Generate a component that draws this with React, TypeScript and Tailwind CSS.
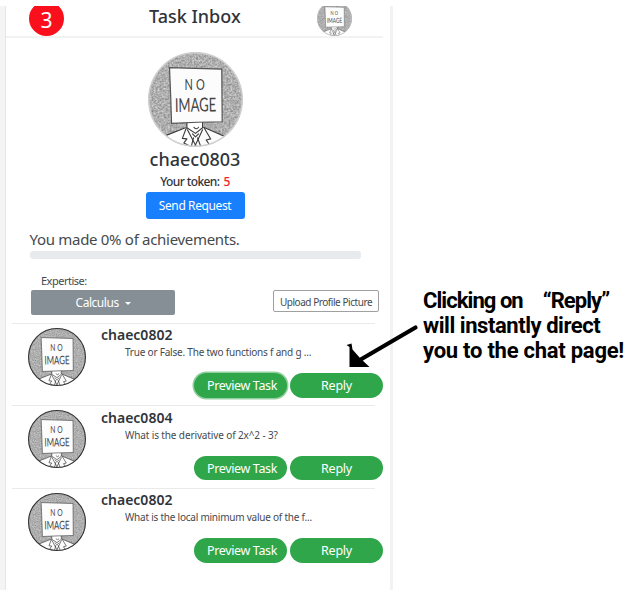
import React from "react";

function Avatar({ className, ring, ringWidth, blend }: { className: string; ring: string; ringWidth: number; blend: number }) {
  const id = React.useId();
  return (
    <svg viewBox="0 0 94 94" className={className}>
      <defs>
        <clipPath id={id + "c"}>
          <circle cx="47" cy="47" r="46.5" />
        </clipPath>
        <filter id={id + "n"} x="0" y="0" width="100%" height="100%" colorInterpolationFilters="sRGB">
          <feTurbulence type="fractalNoise" baseFrequency="0.5" numOctaves="2" seed="4" />
          <feColorMatrix values="0.45 0 0 0 0.46  0.45 0 0 0 0.46  0.45 0 0 0 0.46  0 0 0 0 1" />
        </filter>
      </defs>
      <g clipPath={`url(#${id}c)`}>
        <rect width="94" height="94" fill="#b0b0b0" />
        <rect width="94" height="94" filter={`url(#${id}n)`} opacity={blend} />
        <path d="M8 87 17.700 83 38 74 54.700 74 76 84 86 90V94H8Z" fill="#fdfdfd" />
        <path d="M38.500 69V75Q42 78 47 79Q52 78 54 74V68Z" fill="#fff" />
        <g fill="none" stroke="#3c3c3c" strokeWidth="1.100" strokeLinecap="round" strokeLinejoin="round">
          <path d="M10 87 18 82.500 37 75M55 74.500 76 83.500 85 88" />
          <path d="M38.500 70V75L47 80.500 54 75V69" />
          <path d="M38 75 34 85.500 38.500 86 35.500 90 45 95M39 77 48 94" />
          <path d="M55.500 75 62 86 57.500 87 61 92 51 95M54 77 46 94" />
          <path d="M44 81 47 84 50 81M45 85 43 93M49 85 52 93" />
          <path d="M45.500 74.500Q48 77.500 50 74.500" />
        </g>
        <path d="M21.300 15.500 73 17 73.400 69 49 69.500 23.300 70.500 22.500 45Z" fill="#fcfcfc" stroke="#555" strokeWidth="1.200" />
        <g fill="#444" fontFamily="Lato, sans-serif" fontWeight="400">
          <text y="38" x="53 70" fontSize="16" transform="scale(0.68 1)">NO</text>
          <text x="26.500" y="59" fontSize="19" textLength="41" lengthAdjust="spacingAndGlyphs" transform="rotate(-1 47 52)">IMAGE</text>
        </g>
      </g>
      <circle cx="47" cy="47" r={47 - ringWidth / 2} fill="none" stroke={ring} strokeWidth={ringWidth} />
    </svg>
  );
}

const tasks = [
  { user: "chaec0802", text: "True or False. The two functions f and g ...", focused: true, track: "tracking-[-0.21px]" },
  { user: "chaec0804", text: "What is the derivative of 2x^2 - 3?", focused: false, track: "tracking-[-0.12px]" },
  { user: "chaec0802", text: "What is the local minimum value of the f...", focused: false, track: "tracking-[-0.23px]" },
];

function TaskRow({ task }: { task: (typeof tasks)[number] }) {
  return (
    <div className="ml-[6px] flex h-[82.5px] w-[371px] flex-col">
      <div className="h-px w-[363px] shrink-0 bg-[#eaeaea]" />
      <div className="flex">
        <Avatar className="ml-[16px] mt-[4px] size-[58px] shrink-0" ring="#333" ringWidth={1.8} blend={0.7} />
        <div className="ml-[15px] flex flex-1 flex-col">
          <div className="mt-[1.500px] h-[20px] text-[14px] font-semibold leading-[20px]">
            <span>{task.user}</span>
          </div>
          <div className="ml-[24px] h-[14px] text-[10px] leading-[14px] text-[#444a50]">
            <span className={task.track}>{task.text}</span>
          </div>
          <div className="mt-[14px] flex justify-end gap-[3px]">
            <button className={"h-[24.500px] w-[93px] rounded-full bg-[#30a64a] pl-[3px] pt-px text-[12.500px] leading-[23.500px] tracking-[-0.35px] text-white " + (task.focused ? "ring-[1.5px] ring-[#93cfa0]" : "")}>
              Preview Task
            </button>
            <button className="h-[24.500px] w-[93px] rounded-full bg-[#30a64a] pt-px text-[12.500px] leading-[23.500px] tracking-[-0.25px] text-white">Reply</button>
          </div>
        </div>
      </div>
    </div>
  );
}

export default function App() {
  return (
    <div className="relative flex h-[600px] w-[634px] overflow-hidden bg-white pt-[6px] font-['Noto_Sans','Open_Sans',sans-serif] text-[#2f343a] whitespace-nowrap">
      <div className="h-[584px] w-[6px] border-r border-[#e6e6e6] bg-[#f4f4f4]" />
      <main className="flex h-[584px] w-[387px] flex-col border-r-[3px] border-[#f2f2f2]">
        <header className="flex h-[31.500px] w-[377px] shrink-0 items-end overflow-hidden border-b-[2px] border-[#f2f2f2]">
          <div className="ml-[23px] flex size-[35px] shrink-0 items-center justify-center rounded-full bg-[#fa0f1c] pt-[3px] text-[21px] leading-[22px] text-white">3</div>
          <h1 className="mb-[9.500px] ml-[85px] w-[92px] text-[18px] font-medium leading-[20px]">Task Inbox</h1>
          <Avatar className="ml-[76px] size-[35px] shrink-0" ring="#bbb" ringWidth={2} blend={0.6} />
        </header>
        <section className="flex w-[378px] shrink-0 flex-col items-center">
          <Avatar className="mt-[14.500px] size-[95px]" ring="#cfcfcf" ringWidth={1.5} blend={1} />
          <h2 className="text-[18px] font-medium leading-[24px]">chaec0803</h2>
          <p className="mt-[2px] text-[12px] font-medium leading-[18px] tracking-[-0.6px]">
            Your token:<span className="ml-[4px] text-[#f5232d]">5</span>
          </p>
          <button className="mt-[1px] h-[27px] w-[99px] rounded-[3px] bg-[#187fff] text-[12px] leading-[27px] tracking-[-0.4px] text-white">Send Request</button>
        </section>
        <section className="ml-[23.500px] mt-[10px] shrink-0">
          <p className="h-[21px] text-[15px] leading-[21px] tracking-[-0.3px] text-[#44494e]">You made 0% of achievements.</p>
          <div className="mt-[0.5px] h-[8px] w-[331px] rounded-[3px] bg-[#e7ebee]" />
        </section>
        <section className="ml-[25px] mt-[13.500px] flex w-[348px] shrink-0 items-start justify-between">
          <div>
            <p className="ml-[10px] h-[17px] text-[11px] leading-[17px] tracking-[-0.5px] text-[#44494e]">Expertise:</p>
            <button className="mt-[1px] flex h-[24.500px] w-[144px] items-center rounded-[2px] bg-[#868e96] pl-[44.500px] pt-[2px] text-[12px] tracking-[-0.45px] text-white">
              <span className="w-[49px] text-left">Calculus</span>
              <span className="border-x-[3px] border-t-[3px] border-x-transparent border-t-white" />
            </button>
          </div>
          <button className="mt-[18px] h-[21.500px] w-[106px] rounded-[2px] border border-[#a0a0a0] bg-white pt-[1px] text-[10px] leading-[20px] tracking-[-0.45px] text-[#44494e]">Upload Profile Picture</button>
        </section>
        <section className="mt-[8px]">
          {tasks.map((task, i) => (
            <TaskRow key={i} task={task} />
          ))}
        </section>
      </main>
      <aside className="ml-[30px] mt-[282px] font-['Roboto','Liberation_Sans',sans-serif] text-[22px] font-bold leading-[25px] text-black">
        <p className="flex gap-[20px] tracking-[-0.95px]">
          <span>Clicking on</span>
          <span>“Reply”</span>
        </p>
        <p className="tracking-[-0.45px]">will instantly direct</p>
        <p className="tracking-[-0.25px]">you to the chat page!</p>
      </aside>
      <svg className="pointer-events-none absolute left-[340px] top-[316px]" width="84" height="60" viewBox="340 316 84 60">
        <path d="M359 360.500 415.500 327.500" stroke="#000" strokeWidth="4.200" strokeLinecap="round" />
        <path d="M346.500 345 351.500 343.500 352.500 349.500 360 358 369.500 367H349.500V347Z" fill="#000" />
      </svg>
    </div>
  );
}
